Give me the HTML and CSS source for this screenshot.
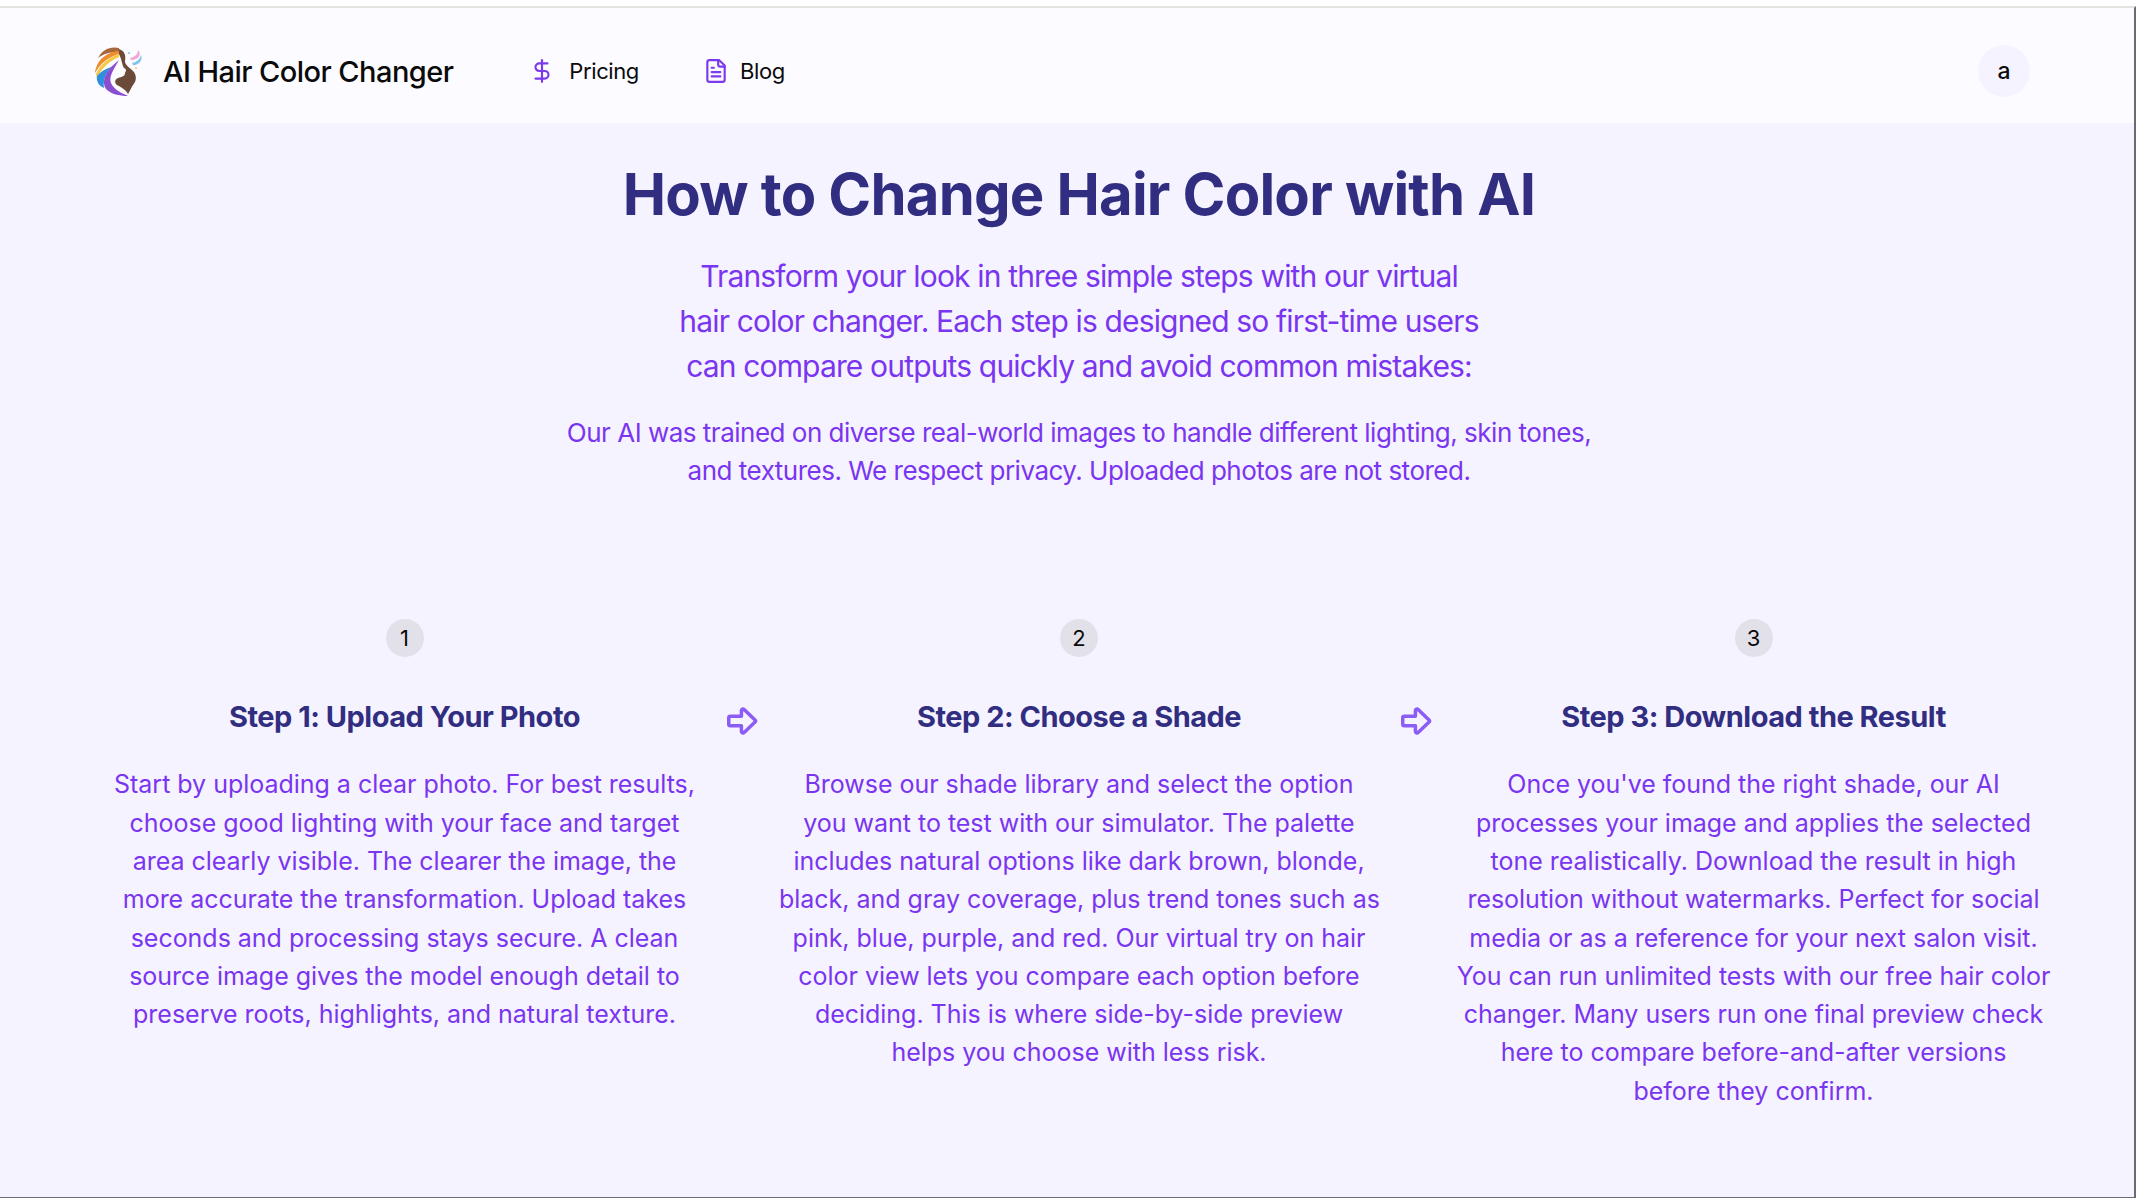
FILE: index.html
```html
<!DOCTYPE html>
<html lang="en">
<head>
  <meta charset="UTF-8">
  <meta name="viewport" content="width=device-width, initial-scale=1.0">
  <title>How to Change Hair Color with AI</title>
  <link rel="stylesheet" href="styles.css">
</head>
<body>
  <div class="page">
    <header class="navbar">
      <a class="brand" href="#">
        <svg class="brand-logo" viewBox="0 0 52 50" aria-hidden="true">
          <path d="M27 2C18 0 10 4 6 12C11 8 18 6 27 6Z" fill="#a9683a"/>
          <path d="M27 5C16 6 7 12 4 22C3 24 3 26 3 27C8 18 16 11 27 8Z" fill="#ef8d2e"/>
          <path d="M27 8C17 11 8 19 4 28L5 32C9 23 17 15 27 11Z" fill="#f7c840"/>
          <path d="M5 30C4 35 7 40 12 42C11 35 13 28 19 21C13 23 8 26 5 30Z" fill="#2f8fdc"/>
          <path d="M19 21C12 29 10 37 14 43C19 48 27 50 36 50C30 47 22 44 19 37C17 31 20 26 27 14Z" fill="#8a4fd0"/>
          <path d="M27 3C33 5 34 10 33 15C33 19 37 21 40 24C45 28 45 35 41 39C39 42 38 45 36 48C34 44 30 42 27 40C22 38 22 34 26 32C30 31 33 30 33 27C34 25 35 23 32 22C30 19 30 14 27 8Z" fill="#6b4a3a"/>
          <path d="M38 12C43 11 46 8 46 4C50 8 47 14 39 14Z" fill="#f0a8d4"/>
          <path d="M40 17C45 16 48 13 49 9C51 14 47 19 41 19Z" fill="#7fc4ee"/>
          <circle cx="37" cy="7" r="1" fill="#7fc4ee"/>
          <circle cx="44" cy="22" r="1" fill="#eec96a"/>
        </svg>
        <span>AI Hair Color Changer</span>
      </a>
      <nav class="nav-links">
        <a class="nav-link" href="#">
          <svg class="nav-icon" viewBox="0 0 24 24"><path d="M12 2v20"/><path d="M17 5H9.5a3.5 3.5 0 0 0 0 7h5a3.5 3.5 0 0 1 0 7H6"/></svg>
          Pricing
        </a>
        <a class="nav-link nav-link-tight" href="#">
          <svg class="nav-icon" viewBox="0 0 24 24"><path d="M15 2H6a2 2 0 0 0-2 2v16a2 2 0 0 0 2 2h12a2 2 0 0 0 2-2V7Z"/><path d="M14 2v4a2 2 0 0 0 2 2h4"/><path d="M10 9H8"/><path d="M16 13H8"/><path d="M16 17H8"/></svg>
          Blog
        </a>
      </nav>
      <div class="avatar">a</div>
    </header>

    <main class="how-to">
      <h1>How to Change Hair Color with AI</h1>
      <p class="lead">Transform your look in three simple steps with our virtual<br>hair color changer. Each step is designed so first-time users<br>can compare outputs quickly and avoid common mistakes:</p>
      <p class="sublead">Our AI was trained on diverse real-world images to handle different lighting, skin tones,<br>and textures. We respect privacy. Uploaded photos are not stored.</p>

      <section class="steps">
        <article class="step">
          <div class="step-num">1</div>
          <h3>Step 1: Upload Your Photo</h3>
          <p>Start by uploading a clear photo. For best results,<br>choose good lighting with your face and target<br>area clearly visible. The clearer the image, the<br>more accurate the transformation. Upload takes<br>seconds and processing stays secure. A clean<br>source image gives the model enough detail to<br>preserve roots, highlights, and natural texture.</p>
        </article>
        <svg class="step-arrow" viewBox="0 0 24 24"><path d="M11 9V5.4a1 1 0 0 1 1.7-.7l6.9 6.6a1 1 0 0 1 0 1.4l-6.9 6.6a1 1 0 0 1-1.7-.7V15H4a1 1 0 0 1-1-1v-4a1 1 0 0 1 1-1Z"/></svg>
        <article class="step">
          <div class="step-num">2</div>
          <h3>Step 2: Choose a Shade</h3>
          <p>Browse our shade library and select the option<br>you want to test with our simulator. The palette<br>includes natural options like dark brown, blonde,<br>black, and gray coverage, plus trend tones such as<br>pink, blue, purple, and red. Our virtual try on hair<br>color view lets you compare each option before<br>deciding. This is where side-by-side preview<br>helps you choose with less risk.</p>
        </article>
        <svg class="step-arrow" viewBox="0 0 24 24"><path d="M11 9V5.4a1 1 0 0 1 1.7-.7l6.9 6.6a1 1 0 0 1 0 1.4l-6.9 6.6a1 1 0 0 1-1.7-.7V15H4a1 1 0 0 1-1-1v-4a1 1 0 0 1 1-1Z"/></svg>
        <article class="step">
          <div class="step-num">3</div>
          <h3>Step 3: Download the Result</h3>
          <p>Once you've found the right shade, our AI<br>processes your image and applies the selected<br>tone realistically. Download the result in high<br>resolution without watermarks. Perfect for social<br>media or as a reference for your next salon visit.<br>You can run unlimited tests with our free hair color<br>changer. Many users run one final preview check<br>here to compare before-and-after versions<br>before they confirm.</p>
        </article>
      </section>
    </main>
  </div>
</body>
</html>
```

FILE: styles.css
```css
* {
  box-sizing: border-box;
}

html, body {
  height: 100%;
}

body {
  margin: 0;
  background: #fff;
  font-family: "Inter", "Noto Sans", sans-serif;
  overflow: hidden;
}

.page {
  height: 1192px;
  margin-top: 6px;
  border-top: 2px solid #e3e3e0;
  border-right: 2px solid #6b6b70;
  border-bottom: 1px solid #6b6b70;
  background: #f5f3ff;
}

.navbar {
  display: flex;
  align-items: center;
  height: 115px;
  padding: 11px 104px 0 92px;
  background: #fcfbff;
}

.brand {
  display: flex;
  align-items: center;
  gap: 19px;
  color: #0a0a0a;
  font-size: 29px;
  font-weight: 500;
  letter-spacing: -0.55px;
  text-decoration: none;
}

.brand-logo {
  width: 52px;
  height: 50px;
  filter: blur(0.4px);
}

.nav-links {
  display: flex;
  gap: 64px;
  margin-left: 76px;
}

.nav-link {
  display: flex;
  align-items: center;
  gap: 14px;
  color: #0a0a0a;
  font-size: 22px;
  letter-spacing: -0.4px;
  text-decoration: none;
}

.nav-link-tight {
  gap: 11px;
}

.nav-icon {
  width: 26px;
  height: 26px;
  fill: none;
  stroke: #7c3aed;
  stroke-width: 2;
  stroke-linecap: round;
  stroke-linejoin: round;
}

.avatar {
  display: flex;
  align-items: center;
  justify-content: center;
  width: 52px;
  height: 52px;
  margin-left: auto;
  border-radius: 50%;
  background: #f5f3ff;
  color: #0a0a0a;
  font-size: 23px;
  font-weight: 500;
}

.how-to {
  padding: 37px 0 0 24px;
  text-align: center;
}

.how-to h1 {
  margin: 0;
  color: #312e81;
  font-size: 58px;
  font-weight: 700;
  line-height: 68px;
  letter-spacing: -0.8px;
}

.lead {
  margin: 25.5px 0 0;
  color: #7a35f0;
  font-size: 30px;
  line-height: 45px;
  letter-spacing: -0.84px;
}

.sublead {
  margin: 25px 0 0;
  color: #7a35f0;
  font-size: 26px;
  line-height: 38.4px;
  letter-spacing: -0.5px;
}

.steps {
  display: flex;
  justify-content: center;
  align-items: flex-start;
  margin-top: 129px;
}

.step {
  width: 600px;
}

.step-num {
  display: flex;
  align-items: center;
  justify-content: center;
  width: 38px;
  height: 38px;
  margin: 0 auto;
  border-radius: 50%;
  background: #e2e1ea;
  color: #0a0a0a;
  font-size: 22px;
}

.step h3 {
  margin: 41px 0 0;
  color: #312e81;
  font-size: 29px;
  font-weight: 700;
  line-height: 38px;
  letter-spacing: -0.5px;
}

.step p {
  margin: 29px 0 0;
  color: #7a35f0;
  font-size: 25px;
  line-height: 38.3px;
  letter-spacing: -0.02px;
  white-space: nowrap;
}

.step-arrow {
  flex: none;
  width: 38px;
  height: 38px;
  margin: 83px 17.25px 0 19.25px;
  fill: none;
  stroke: #8b5cf6;
  stroke-width: 2.2;
  stroke-linejoin: round;
}
```
